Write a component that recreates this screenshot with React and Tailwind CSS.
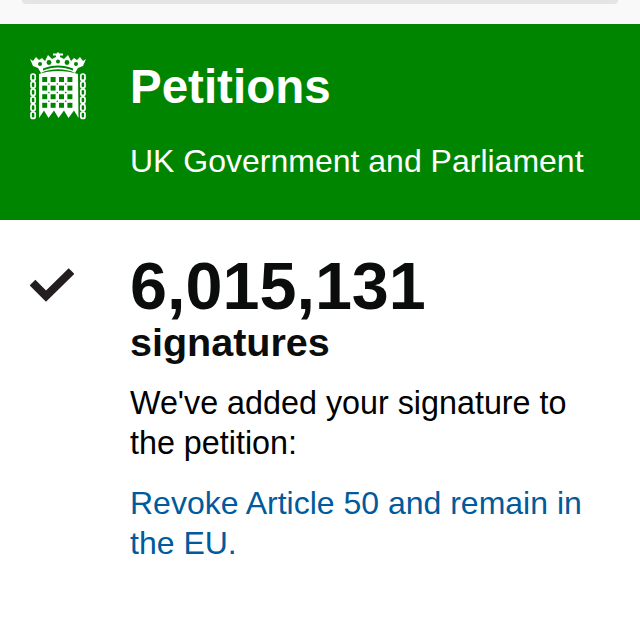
import React from "react";

const Portcullis = () => {
  const cols = [0, 1, 2, 3];
  const rows = [0, 1, 2, 3];
  const links = [0, 1, 2, 3, 4, 5];
  return (
    <svg width="56" height="68" viewBox="0 0 56 68" className="block" fill="#fff">
      {/* crown */}
      <path d="M0 7 L3 9 L6 5 L9 8 L12 6 L15 9 L18 3 L22 7 L26 5 L26 3.5 L23 3.5 L23 1.5 L26.5 1.5 L28 0 L29.5 1.5 L33 1.5 L33 3.5 L30 3.5 L30 5 L34 7 L38 3 L41 9 L44 6 L47 8 L50 5 L53 9 L56 7 L53 14 L48 16 L45 21 C36 16 20 16 11 21 L8 16 L3 14 Z" />
      <g fill="#008500">
        <circle cx="10" cy="12" r="2" />
        <circle cx="19" cy="10.5" r="2.4" />
        <circle cx="28" cy="9.5" r="2" />
        <circle cx="37" cy="10.5" r="2.4" />
        <circle cx="46" cy="12" r="2" />
        <path d="M13 18.5 C23 14.5 33 14.5 43 18.5 L43 16.5 C33 12.5 23 12.5 13 16.5 Z" />
      </g>
      {/* gate */}
      <path d="M9 22 C20 18 36 18 48 22 L48.5 66 L44 58.5 L38.5 66 L34 58.5 L28.5 66 L24 58.5 L18.5 66 L14 58.5 L9 66 Z" />
      <g fill="#008500">
        {rows.map((r) =>
          cols.map((c) => (
            <rect key={`${r}-${c}`} x={12.2 + c * 8.4} y={25 + r * 8.6} width="5" height="5" />
          ))
        )}
        {[0, 1, 2].map((r) =>
          [0, 1, 2].map((c) => (
            <circle key={`d${r}-${c}`} cx={18.9 + c * 8.4} cy={32 + r * 8.6} r="0.8" />
          ))
        )}
      </g>
      {/* chains */}
      <g fill="none" stroke="#fff" strokeWidth="1.7">
        {links.map((i) => (
          <rect key={`l${i}`} x="1" y={22 + i * 7.6} width="4.2" height="6.4" rx="2" />
        ))}
        {links.map((i) => (
          <rect key={`r${i}`} x="50.8" y={22 + i * 7.6} width="4.2" height="6.4" rx="2" />
        ))}
      </g>
    </svg>
  );
};

const Check = () => (
  <svg width="44" height="36" viewBox="0 0 44 36" className="block">
    <path d="M2.5 14.5 L16 28 L41.5 3" fill="none" stroke="#231f20" strokeWidth="8" />
  </svg>
);

const App = () => {
  return (
    <div className="w-[640px] h-[640px] overflow-hidden bg-white text-[#0b0c0c] font-['Liberation_Sans',Arial,sans-serif]">
      <div className="h-6 bg-[#f9f9f9] px-[22px]">
        <div className="h-1 rounded-b-[14px] bg-[#e4e4e6]"></div>
      </div>
      <header className="h-[196px] bg-[#008500] text-white flex pt-7 pl-[30px]">
        <div className="w-[100px] shrink-0">
          <Portcullis />
        </div>
        <div>
          <h1 className="text-[47.5px] leading-[52px] font-bold mt-[9px]">Petitions</h1>
          <p className="text-[32px] leading-9 mt-[30px]">UK Government and Parliament</p>
        </div>
      </header>
      <main className="flex pt-[38px] pl-[30px]">
        <div className="w-[100px] shrink-0 pt-[10px]">
          <Check />
        </div>
        <div>
          <div className="text-[66.5px] leading-[60px] font-bold -mt-[2px]">6,015,131</div>
          <div className="text-[39.5px] leading-[44px] font-bold mt-1">signatures</div>
          <p className="text-[32.3px] leading-10 mt-[19px] text-black">
            We've added your signature to<br />the petition:
          </p>
          <a href="#" className="block text-[32px] leading-10 mt-5 text-[#005a9c]">
            Revoke Article 50 and remain in<br />the EU.
          </a>
        </div>
      </main>
    </div>
  );
};

export default App;
